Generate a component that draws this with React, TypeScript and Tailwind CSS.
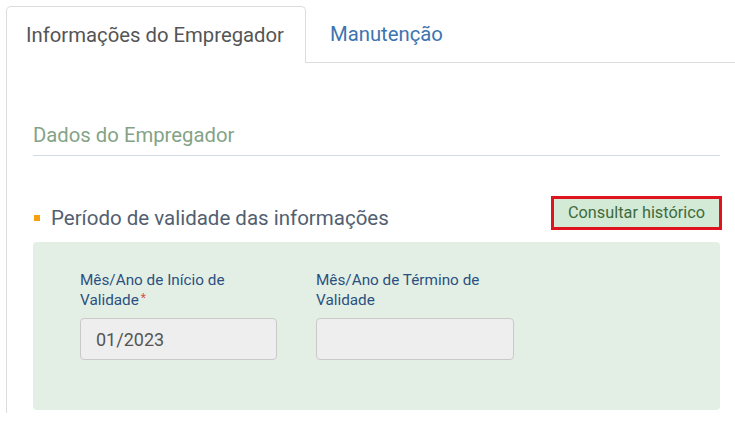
export default function App() {
  return (
    <div className="w-[735px] h-[422px] bg-white overflow-hidden font-['Roboto',sans-serif]">
      {/* Tabs */}
      <div className="flex pl-[6px] pt-[6px]">
        <div className="w-[300px] h-[57px] border border-b-0 border-[#dcdcdc] rounded-t-[5px] pl-[19px] flex items-center text-[20.3px] text-[#555]">
          Informações do Empregador
        </div>
        <div className="flex-1 h-[57px] border-b border-[#dcdcdc] pl-[24px] flex items-center text-[20.3px] text-[#3d74b0]">
          Manutenção
        </div>
      </div>

      {/* Body */}
      <div className="ml-[6px] border-l border-[#dcdcdc] h-[350px] pl-[26px] pr-[15px]">
        <div className="pt-[60px] pb-[8px] leading-[24px] border-b border-[#cfdbe6] text-[20.3px] text-[#84a386]">
          Dados do Empregador
        </div>

        <div className="flex items-center justify-between mt-[40px] h-[34px]">
          <div className="flex items-center gap-[11px] pt-[10px]">
            <span className="w-[6px] h-[6px] bg-[#f5a10f] ml-[1px]" />
            <span className="text-[20.5px] leading-[24px] text-[#526070]">Período de validade das informações</span>
          </div>
          <button className="-mr-[2px] h-[34px] px-[14px] border-[3px] border-[#e0141e] bg-[#d3ead7] text-[16.3px] text-[#3f6b3c]">
            Consultar histórico
          </button>
        </div>

        <div className="mt-[12px] h-[168px] bg-[#e3efe5] rounded-[4px] pl-[47px] pt-[28px] flex gap-[39px]">
          <div className="w-[197px]">
            <div className="text-[15.3px] leading-[20px] text-[#2d4f80] h-[40px]">
              Mês/Ano de Início de Validade
              <span className="ml-[2px] align-top text-[12px] leading-[16px] text-[#d9534f]">*</span>
            </div>
            <div className="mt-[8px] h-[42px] border border-[#c9c9c9] rounded-[4px] bg-[#eeeeee] pl-[15px] flex items-center text-[18px] text-[#555]">
              01/2023
            </div>
          </div>
          <div className="w-[198px]">
            <div className="text-[15.3px] leading-[20px] text-[#2d4f80] h-[40px]">
              Mês/Ano de Término de Validade
            </div>
            <div className="mt-[8px] h-[42px] border border-[#c9c9c9] rounded-[4px] bg-[#eeeeee]" />
          </div>
        </div>
      </div>
    </div>
  )
}
